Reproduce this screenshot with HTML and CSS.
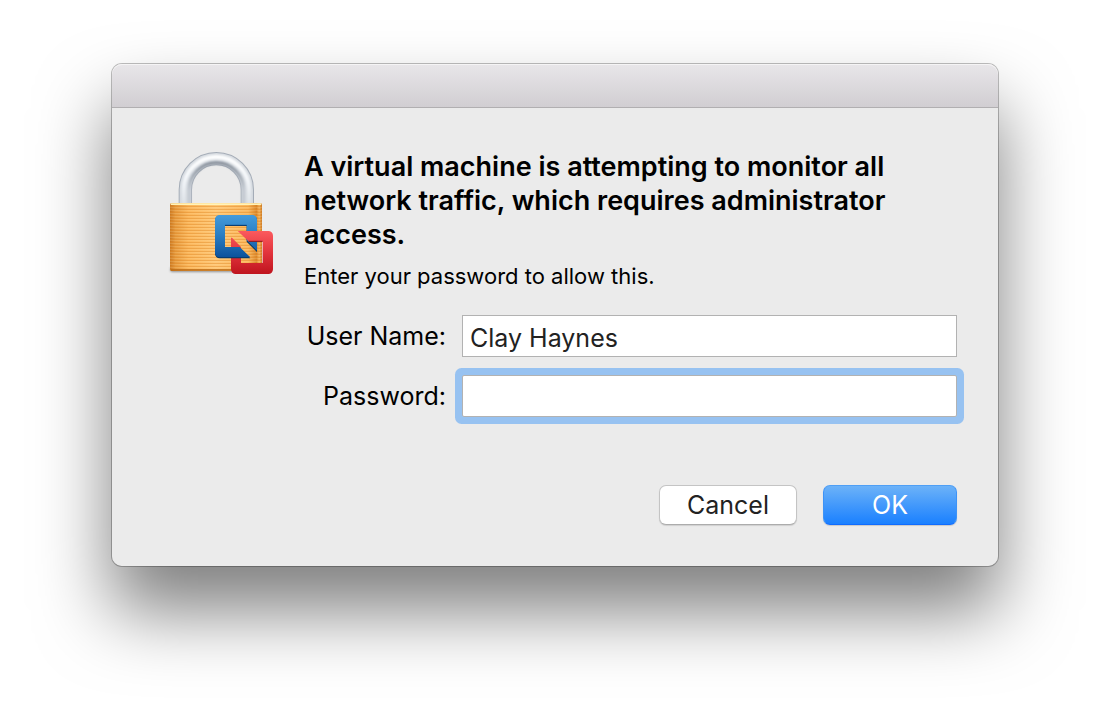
FILE: index.html
```html
<!DOCTYPE html>
<html lang="en">
<head>
    <meta charset="UTF-8">
    <meta name="viewport" content="width=device-width, initial-scale=1.0">
    <title>Authentication Required</title>
    <link rel="stylesheet" href="styles.css">
</head>
<body>
    <main class="dialog" role="dialog" aria-labelledby="dialogTitle">
        <div class="titlebar"></div>

        <form class="dialog-body">
            <svg class="lock-icon" viewBox="36 30 330 384" aria-hidden="true">
                <defs>
                    <linearGradient id="innerShade" gradientUnits="userSpaceOnUse" x1="0" y1="60" x2="0" y2="150">
                        <stop offset="0" stop-color="#7f8893"/>
                        <stop offset="1" stop-color="#c3c9d1"/>
                    </linearGradient>
                    <linearGradient id="shine" gradientUnits="userSpaceOnUse" x1="0" y1="40" x2="0" y2="192">
                        <stop offset="0" stop-color="#fff"/>
                        <stop offset="0.5" stop-color="#f4f7fa"/>
                        <stop offset="1" stop-color="#dde2e7"/>
                    </linearGradient>
                    <linearGradient id="brass" x1="0" y1="0" x2="1" y2="0">
                        <stop offset="0" stop-color="#c97822"/>
                        <stop offset="0.06" stop-color="#e69a3e"/>
                        <stop offset="0.2" stop-color="#fbb75c"/>
                        <stop offset="0.5" stop-color="#ffc878"/>
                        <stop offset="0.85" stop-color="#fbb75c"/>
                        <stop offset="0.94" stop-color="#d98528"/>
                        <stop offset="0.97" stop-color="#f5b25a"/>
                        <stop offset="1" stop-color="#c97822"/>
                    </linearGradient>
                    <linearGradient id="blue" x1="0" y1="0" x2="0" y2="1">
                        <stop offset="0" stop-color="#449bdb"/>
                        <stop offset="0.45" stop-color="#2b7fc4"/>
                        <stop offset="1" stop-color="#0c529c"/>
                    </linearGradient>
                    <linearGradient id="red" gradientUnits="userSpaceOnUse" x1="0" y1="273" x2="0" y2="402">
                        <stop offset="0" stop-color="#fb5a5e"/>
                        <stop offset="0.5" stop-color="#e2343c"/>
                        <stop offset="1" stop-color="#bf141e"/>
                    </linearGradient>
                    <pattern id="ridges" width="8" height="9" patternUnits="userSpaceOnUse">
                        <rect width="8" height="3" fill="#e08a28" opacity="0.45"/>
                        <rect y="3" width="8" height="2" fill="#ffe0a0" opacity="0.3"/>
                    </pattern>
                    <filter id="soft" x="-20%" y="-20%" width="140%" height="150%">
                        <feGaussianBlur stdDeviation="3"/>
                    </filter>
                </defs>

                <!-- shackle -->
                <path d="M91 192V149a93 93 0 0 1 186 0V192" fill="none" stroke="#a3abb6" stroke-width="40"/>
                <path d="M91 192V149a93 93 0 0 1 186 0V192" fill="none" stroke="#d2d7dd" stroke-width="34"/>
                <path d="M103 192V149a81 81 0 0 1 162 0V192" fill="none" stroke="url(#innerShade)" stroke-width="9" filter="url(#soft)"/>
                <path d="M86 192V149a98 98 0 0 1 196 0V192" fill="none" stroke="url(#shine)" stroke-width="13" filter="url(#soft)"/>

                <!-- body -->
                <rect x="46" y="382" width="275" height="14" rx="5" fill="#555" opacity="0.6" filter="url(#soft)"/>
                <rect x="45" y="189" width="276" height="204" rx="5" fill="url(#brass)"/>
                <rect x="45" y="197" width="276" height="192" fill="url(#ridges)"/>
                <rect x="47" y="190" width="272" height="5" rx="2" fill="#fff3b8"/>
                <rect x="47" y="388" width="272" height="4" rx="2" fill="#b96a14"/>

                <!-- badge -->
                <path d="M249 273H340a14 14 0 0 1 14 14V388a14 14 0 0 1-14 14H242a14 14 0 0 1-14-14V293H231L258 321V369H323V304H281Z" fill="url(#red)"/>
                <path d="M194 227H292a14 14 0 0 1 14 14V336L275 305V258H210V323H254L286 355H194a14 14 0 0 1-14-14V241a14 14 0 0 1 14-14Z" fill="#08365f"/>
                <path d="M194 225H292a14 14 0 0 1 14 14V332L275 301V256H210V321H254L286 352H194a14 14 0 0 1-14-14V239a14 14 0 0 1 14-14Z" fill="url(#blue)"/>
                <path d="M249 273H330V304H281Z" fill="url(#red)"/>
                <path d="M281 304H323" stroke="#8f1218" stroke-width="3"/>
                <path d="M210 256H275" stroke="#0b3d70" stroke-width="3"/>
            </svg>

            <div class="dialog-content">
                <h1 id="dialogTitle">A virtual machine is attempting to monitor all network traffic, which requires administrator access.</h1>
                <p class="hint">Enter your password to allow this.</p>

                <div class="fields">
                    <label for="username">User Name:</label>
                    <input type="text" id="username" name="username" value="Clay Haynes">

                    <label for="password">Password:</label>
                    <input type="password" id="password" name="password" class="focused">
                </div>

                <div class="buttons">
                    <button type="button" class="cancel-button">Cancel</button>
                    <button type="submit" class="ok-button">OK</button>
                </div>
            </div>
        </form>
    </main>
</body>
</html>
```
FILE: styles.css
```css
body {
    margin: 0;
    padding: 63px 0;
    min-height: 100vh;
    box-sizing: border-box;
    background: #fff;
    color: #000;
    font-family: Inter, Roboto, sans-serif;
    font-size: 25px;
}

.dialog {
    width: 80%;
    margin: 0 auto;
    box-sizing: border-box;
    border: 1px solid rgba(0, 0, 0, 0.25);
    background: #ebebeb;
    background-clip: padding-box;
    border-radius: 11px;
    box-shadow: 0 44px 72px rgba(0, 0, 0, 0.5);
}

.titlebar {
    height: 44px;
    box-sizing: border-box;
    border-bottom: 1px solid #b1afb1;
    border-radius: 10px 10px 0 0;
    background: linear-gradient(#e8e6e9, #d1ced2);
    box-shadow: inset 0 1px 0 #f5f4f5;
}

.dialog-body {
    display: flex;
    gap: 27px;
    padding: 42px 41px 41px 55px;
}

.lock-icon {
    flex: none;
    width: 110px;
    height: 128px;
}

.dialog-content {
    flex: 1;
}

h1 {
    margin: 0;
    font-size: 27px;
    line-height: 34px;
    font-weight: 600;
}

.hint {
    margin: 10px 0 24px;
    font-size: 22px;
    line-height: 29px;
}

.fields {
    display: grid;
    grid-template-columns: 142px 1fr;
    align-items: center;
    gap: 18px 16px;
}

label {
    text-align: right;
    white-space: nowrap;
}

input {
    width: 100%;
    height: 42px;
    box-sizing: border-box;
    padding: 4px 7px 0;
    border: 1px solid #b2b2b2;
    background: #fff;
    color: #222;
    font: inherit;
    outline: none;
}

.focused {
    border-radius: 2px;
    box-shadow: 0 0 0 7px #97c2f1;
}

.buttons {
    display: flex;
    justify-content: flex-end;
    gap: 26px;
    margin-top: 68px;
}

button {
    height: 40px;
    padding: 0;
    border: 1px solid #c4c4c4;
    border-radius: 7px;
    font: inherit;
}

.cancel-button {
    width: 138px;
    border-bottom-color: #acacac;
    background: #fff;
    color: #222;
    box-shadow: 0 1px 1px rgba(0, 0, 0, 0.12);
}

.ok-button {
    width: 134px;
    border-color: #4f9ff5 #3d93f7 #0f6bff;
    background: linear-gradient(#6cb2f8, #1a80ff);
    color: #fff;
    box-shadow: 0 1px 1px rgba(0, 0, 0, 0.15);
}
```
